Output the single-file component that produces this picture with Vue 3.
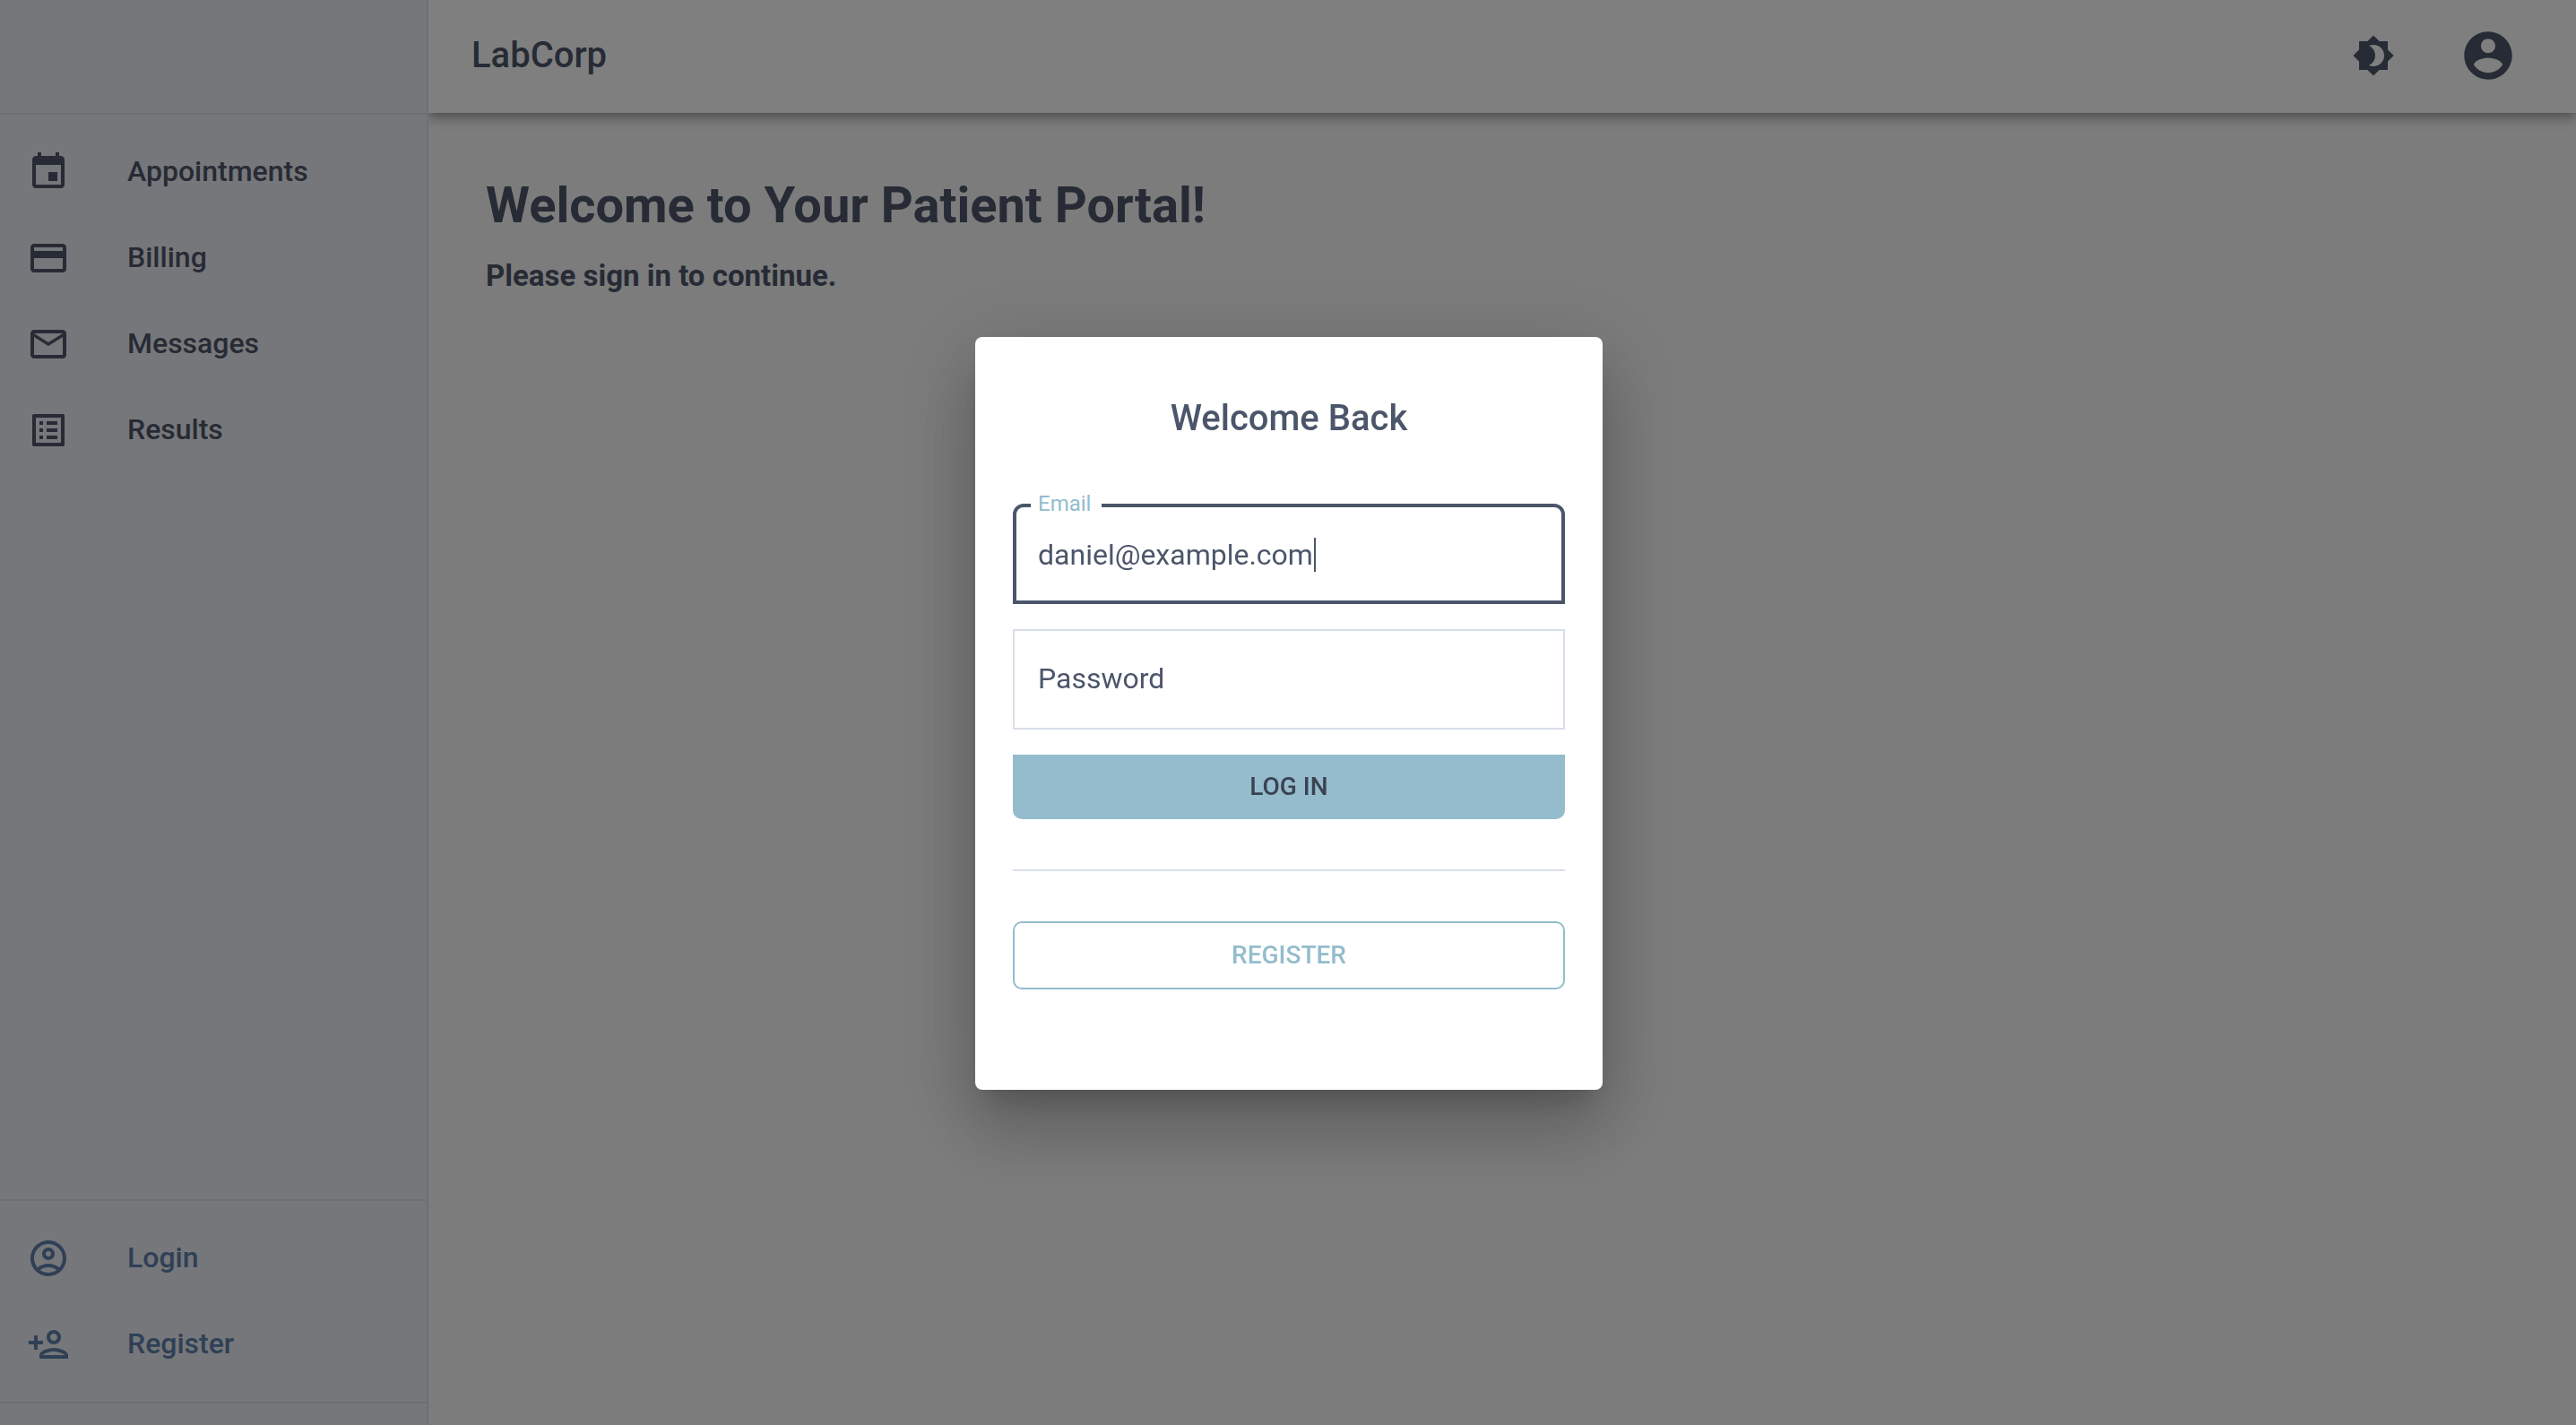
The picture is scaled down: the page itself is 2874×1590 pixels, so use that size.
<script setup>
import { ref } from 'vue'

const mainLinks = [
  {
    label: 'Appointments',
    icon: 'M17 12h-5v5h5v-5zM16 1v2H8V1H6v2H5c-1.11 0-1.99.9-1.99 2L3 19c0 1.1.89 2 2 2h14c1.1 0 2-.9 2-2V5c0-1.1-.9-2-2-2h-1V1h-2zm3 18H5V8h14v11z'
  },
  {
    label: 'Billing',
    icon: 'M20 4H4c-1.11 0-1.99.89-1.99 2L2 18c0 1.11.89 2 2 2h16c1.11 0 2-.89 2-2V6c0-1.11-.89-2-2-2zm0 14H4v-6h16v6zm0-10H4V6h16v2z'
  },
  {
    label: 'Messages',
    icon: 'M20 4H4c-1.1 0-1.99.9-1.99 2L2 18c0 1.1.9 2 2 2h16c1.1 0 2-.9 2-2V6c0-1.1-.9-2-2-2zm0 14H4V8l8 5 8-5v10zm-8-7L4 6h16l-8 5z'
  },
  {
    label: 'Results',
    icon: 'M19 5v14H5V5h14m1.1-2H3.9c-.5 0-.9.4-.9.9v16.2c0 .4.4.9.9.9h16.2c.4 0 .9-.5.9-.9V3.9c0-.5-.5-.9-.9-.9zM11 7h6v2h-6V7zm0 4h6v2h-6v-2zm0 4h6v2h-6zM7 7h2v2H7zm0 4h2v2H7zm0 4h2v2H7z'
  }
]

const accountLinks = [
  {
    label: 'Login',
    icon: 'M12 2C6.48 2 2 6.48 2 12s4.48 10 10 10 10-4.48 10-10S17.52 2 12 2zM7.35 18.5C8.66 17.56 10.26 17 12 17s3.34.56 4.65 1.5C15.34 19.44 13.74 20 12 20s-3.34-.56-4.65-1.5zm10.79-1.38C16.45 15.8 14.32 15 12 15s-4.45.8-6.14 2.12C4.7 15.73 4 13.95 4 12c0-4.42 3.58-8 8-8s8 3.58 8 8c0 1.95-.7 3.73-1.86 5.12zM12 6c-1.93 0-3.5 1.57-3.5 3.5S10.07 13 12 13s3.5-1.57 3.5-3.5S13.93 6 12 6zm0 5c-.83 0-1.5-.67-1.5-1.5S11.17 8 12 8s1.5.67 1.5 1.5S12.83 11 12 11z'
  },
  {
    label: 'Register',
    icon: 'M15 12c2.21 0 4-1.79 4-4s-1.79-4-4-4-4 1.79-4 4 1.79 4 4 4zm0-6c1.1 0 2 .9 2 2s-.9 2-2 2-2-.9-2-2 .9-2 2-2zm0 8c-2.67 0-8 1.34-8 4v2h16v-2c0-2.66-5.33-4-8-4zm-6 4c.22-.72 3.31-2 6-2 2.7 0 5.8 1.29 6 2H9zm-3-3v-3h3v-2H6V7H4v3H1v2h3v3z'
  }
]

const email = ref('daniel@example.com')
const password = ref('')
</script>

<template>
  <div class="portal">
    <aside class="drawer">
      <div class="drawer-top"></div>
      <nav class="links" aria-label="Main">
        <a v-for="link in mainLinks" :key="link.label" class="link" href="#">
          <svg class="icon" viewBox="0 0 24 24" aria-hidden="true"><path :d="link.icon" /></svg>
          <span class="link-text">{{ link.label }}</span>
        </a>
      </nav>
      <nav class="links account" aria-label="Account">
        <a v-for="link in accountLinks" :key="link.label" class="link" href="#">
          <svg class="icon" viewBox="0 0 24 24" aria-hidden="true"><path :d="link.icon" /></svg>
          <span class="link-text">{{ link.label }}</span>
        </a>
      </nav>
    </aside>

    <div class="page">
      <header class="appbar">
        <span class="brand">LabCorp</span>
        <button class="icon-button" type="button" aria-label="Toggle theme">
          <svg class="icon" viewBox="0 0 24 24" aria-hidden="true">
            <path d="M20 8.69V4h-4.69L12 .69 8.69 4H4v4.69L.69 12 4 15.31V20h4.69L12 23.31 15.31 20H20v-4.69L23.31 12 20 8.69zM12 18c-.89 0-1.74-.2-2.5-.55C11.56 16.5 13 14.42 13 12s-1.44-4.5-3.5-5.45C10.26 6.2 11.11 6 12 6c3.31 0 6 2.69 6 6s-2.69 6-6 6z" />
          </svg>
        </button>
        <button class="icon-button" type="button" aria-label="Account">
          <svg class="icon large" viewBox="0 0 24 24" aria-hidden="true">
            <path d="M12 2C6.48 2 2 6.48 2 12s4.48 10 10 10 10-4.48 10-10S17.52 2 12 2zm0 3c1.66 0 3 1.34 3 3s-1.34 3-3 3-3-1.34-3-3 1.34-3 3-3zm0 14.2c-2.5 0-4.71-1.28-6-3.22.03-1.99 4-3.08 6-3.08 1.99 0 5.97 1.09 6 3.08-1.29 1.94-3.5 3.22-6 3.22z" />
          </svg>
        </button>
      </header>
      <main class="content">
        <h1>Welcome to Your Patient Portal!</h1>
        <p>Please sign in to continue.</p>
      </main>
    </div>

    <div class="backdrop">
      <form class="dialog" role="dialog" aria-labelledby="dialog-title" @submit.prevent>
        <h2 id="dialog-title">Welcome Back</h2>
        <div class="field focused">
          <label for="email">Email</label>
          <input id="email" v-model="email" type="text" autocomplete="off" />
          <span class="caret"></span>
        </div>
        <div class="field">
          <input id="password" v-model="password" type="password" placeholder="Password" aria-label="Password" />
        </div>
        <button class="login" type="submit">LOG IN</button>
        <hr />
        <button class="register" type="button">REGISTER</button>
      </form>
    </div>
  </div>
</template>

<style>
body {
  margin: 0;
}
</style>

<style scoped>
.portal,
.portal * {
  box-sizing: border-box;
}

.portal {
  display: flex;
  min-height: 100vh;
  background: #f8f8f8;
  color: #4c566a;
  font-family: Roboto, sans-serif;
  font-size: 32px;
  line-height: 48px;
}

.drawer {
  position: relative;
  z-index: 1;
  display: flex;
  flex-direction: column;
  flex: 0 0 478px;
  padding-bottom: 24px;
  background: #eceff4;
  border-right: 2px solid #d8dee9;
}

.drawer-top {
  height: 128px;
  border-bottom: 2px solid #d8dee9;
}

.links {
  display: flex;
  flex-direction: column;
  padding: 16px 0;
}

.account {
  margin-top: auto;
  border-top: 2px solid #d8dee9;
  border-bottom: 2px solid #d8dee9;
}

.link {
  display: flex;
  align-items: center;
  gap: 64px;
  height: 96px;
  padding: 0 30px;
  color: #4c566a;
  font-weight: 500;
  text-decoration: none;
}

.account .link {
  color: #5e81ac;
}

.link-text {
  padding-bottom: 2px;
}

.icon {
  display: block;
  width: 48px;
  height: 48px;
  fill: currentColor;
}

.icon.large {
  width: 64px;
  height: 64px;
}

.page {
  flex: 1;
  min-width: 0;
}

.appbar {
  display: flex;
  align-items: center;
  gap: 24px;
  height: 126px;
  padding: 0 42px 2px 48px;
  background: #fff;
  box-shadow: 0 4px 8px -2px rgba(0, 0, 0, 0.2), 0 8px 10px rgba(0, 0, 0, 0.14), 0 2px 20px rgba(0, 0, 0, 0.12);
}

.brand {
  flex: 1;
  font-size: 40px;
  font-weight: 500;
}

.icon-button {
  padding: 24px;
  border: 0;
  background: none;
  color: inherit;
}

.content {
  padding: 64px;
}

h1 {
  margin: 0;
  font-size: 56px;
  line-height: 78px;
  font-weight: 700;
}

.content p {
  margin: 16px 0 0;
  font-size: 33px;
  font-weight: 700;
}

.backdrop {
  position: fixed;
  inset: 0;
  z-index: 2;
  display: flex;
  align-items: center;
  justify-content: center;
  padding: 2px 0 0 2px;
  background: rgba(0, 0, 0, 0.5);
}

.dialog {
  display: flex;
  flex-direction: column;
  width: 700px;
  padding: 61px 42px 112px;
  border-radius: 8px;
  background: #fff;
  box-shadow: 0 22px 30px -14px rgba(0, 0, 0, 0.2), 0 48px 76px 6px rgba(0, 0, 0, 0.14), 0 18px 92px 16px rgba(0, 0, 0, 0.12);
}

h2 {
  margin: 0 0 65px;
  font-size: 40px;
  line-height: 60px;
  font-weight: 500;
  text-align: center;
}

.field {
  position: relative;
  margin-bottom: 28px;
}

.field input {
  display: block;
  width: 100%;
  height: 112px;
  padding: 0 26px 2px;
  border: 2px solid #d8dee9;
  border-radius: 0;
  outline: 0;
  background: #fff;
  color: #4c566a;
  font: inherit;
}

.field input::placeholder {
  color: #4c566a;
  opacity: 1;
}

.field.focused input {
  padding: 2px 24px 0;
  border: 4px solid #4c566a;
  border-radius: 12px 12px 0 0;
}

.field label {
  position: absolute;
  top: -16px;
  left: 20px;
  padding: 0 12px 0 8px;
  background: #fff;
  color: #94bccd;
  font-size: 24px;
  line-height: 32px;
}

.caret {
  position: absolute;
  top: 38px;
  left: 336px;
  width: 2px;
  height: 38px;
  background: #4c566a;
}

.login,
.register {
  font-family: inherit;
  font-size: 28px;
  line-height: 48px;
  font-weight: 500;
}

.login {
  padding: 12px;
  border: 0;
  border-radius: 0 0 10px 10px;
  background: #94bccd;
  color: #3b4252;
}

.register {
  padding: 12px;
  border: 2px solid #94bccd;
  border-radius: 10px;
  background: #fff;
  color: #94bccd;
}

hr {
  width: 100%;
  height: 2px;
  margin: 56px 0;
  border: 0;
  background: #d8dee9;
}
</style>
